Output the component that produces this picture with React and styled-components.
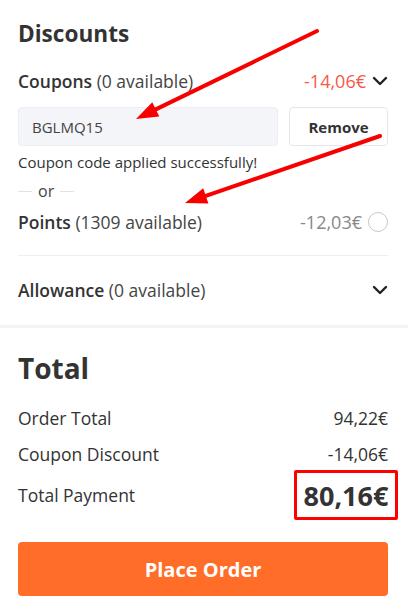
import styled, { createGlobalStyle } from 'styled-components'

const GlobalStyle = createGlobalStyle`
    body {
        margin: 0;
        background: #fff;
        font-family: "Open Sans", "Liberation Sans", sans-serif;
        color: #333;
    }
`

const Chevron = () => (
    <svg width="16" height="10" viewBox="0 0 16 10">
        <path d="M2 2 L8 8 L14 2" fill="none" stroke="#222" strokeWidth="2.4" strokeLinecap="round" strokeLinejoin="round" />
    </svg>
)

const Arrow = ({ x1, y1, x2, y2 }) => {
    const dx = x2 - x1
    const dy = y2 - y1
    const len = Math.hypot(dx, dy)
    const ux = dx / len
    const uy = dy / len
    const bx = x2 - ux * 22
    const by = y2 - uy * 22
    const px = -uy * 8
    const py = ux * 8
    return (
        <g>
            <line x1={x1} y1={y1} x2={bx} y2={by} stroke="#f80000" strokeWidth="4" strokeLinecap="round" />
            <polygon points={`${x2},${y2} ${bx + px},${by + py} ${bx - px},${by - py}`} fill="#f80000" />
        </g>
    )
}

const App = () => {
    return (
        <Page>
            <GlobalStyle />
            <Section>
                <Heading>Discounts</Heading>
                <Row style={{ marginTop: 17 }}>
                    <Label><b>Coupons</b> (0 available)</Label>
                    <Right>
                        <Amount tone="red">-14,06€</Amount>
                        <Chevron />
                    </Right>
                </Row>
                <CouponRow>
                    <CodeBox>BGLMQ15</CodeBox>
                    <RemoveButton>Remove</RemoveButton>
                </CouponRow>
                <Message>Coupon code applied successfully!</Message>
                <OrLine>or</OrLine>
                <Row style={{ marginTop: 7 }}>
                    <Label><b>Points</b> (1309 available)</Label>
                    <Right>
                        <Amount tone="grey">-12,03€</Amount>
                        <Radio />
                    </Right>
                </Row>
                <Divider />
                <Row>
                    <Label><b>Allowance</b> (0 available)</Label>
                    <Right><Chevron /></Right>
                </Row>
            </Section>
            <ThickDivider />
            <Section>
                <TotalHeading>Total</TotalHeading>
                <SumRow style={{ marginTop: 17 }}>
                    <span>Order Total</span>
                    <span>94,22€</span>
                </SumRow>
                <SumRow style={{ marginTop: 6 }}>
                    <span>Coupon Discount</span>
                    <span>-14,06€</span>
                </SumRow>
                <PaymentRow>
                    <span>Total Payment</span>
                    <PaymentValue>80,16€</PaymentValue>
                </PaymentRow>
                <PlaceOrder>Place Order</PlaceOrder>
            </Section>
            <Annotations width="408" height="603" viewBox="0 0 408 603">
                <Arrow x1={317} y1={31} x2={136} y2={119} />
                <Arrow x1={380} y1={136} x2={185} y2={203} />
            </Annotations>
        </Page>
    )
}

export default App

// STYLES
const Page = styled.div`
    position: relative;
    width: 408px;
    height: 603px;
    overflow: hidden;
`

const Section = styled.div`
    padding: 19px 20px 0 18px;
`

const Heading = styled.h2`
    margin: 0;
    font-size: 22.6px;
    line-height: 30px;
    font-weight: 700;
    color: #333;
`

const TotalHeading = styled(Heading)`
    font-size: 28px;
    line-height: 36px;
    margin-top: 3px;
`

const Row = styled.div`
    display: flex;
    align-items: center;
    justify-content: space-between;
    height: 30px;
    font-size: 17.5px;
`

const Label = styled.div`
    color: #444;
    b {
        font-weight: 600;
        color: #333;
    }
`

const Right = styled.div`
    display: flex;
    align-items: center;
    gap: 6px;
    svg { display: block; }
`

const Amount = styled.span`
    font-size: 18px;
    color: ${p => (p.tone === 'red' ? '#f8584a' : '#888')};
`

const Radio = styled.span`
    width: 20px;
    height: 20px;
    border-radius: 50%;
    border: 1px solid #c8c8c8;
    box-sizing: border-box;
    margin-right: 0;
`

const CouponRow = styled.div`
    display: flex;
    gap: 11px;
    margin-top: 11px;
    height: 39px;
`

const CodeBox = styled.div`
    flex: 1;
    display: flex;
    align-items: center;
    padding: 0 13px;
    background: #f4f5f9;
    border: 1px solid #eceef3;
    border-radius: 4px;
    font-size: 15px;
    color: #444;
`

const RemoveButton = styled.button`
    width: 99px;
    background: #fff;
    border: 1px solid #e6e6e6;
    border-radius: 4px;
    font-family: inherit;
    font-size: 15px;
    font-weight: 700;
    color: #333;
    padding: 0;
`

const Message = styled.div`
    margin-top: 7px;
    font-size: 15px;
    line-height: 18px;
    color: #333;
`

const OrLine = styled.div`
    display: flex;
    align-items: center;
    gap: 6px;
    margin-top: 11px;
    height: 18px;
    font-size: 16px;
    color: #444;
    &::before, &::after {
        content: '';
        width: 14px;
        height: 1px;
        background: #e2e2e2;
    }
`

const Divider = styled.div`
    height: 1px;
    background: #eeeef3;
    margin: 18px 0 19px;
`

const ThickDivider = styled.div`
    height: 3px;
    background: #f3f3f7;
    margin-top: 20px;
`

const SumRow = styled.div`
    display: flex;
    justify-content: space-between;
    align-items: center;
    height: 30px;
    font-size: 17.5px;
    color: #333;
`

const PaymentRow = styled(SumRow)`
    height: 50px;
    margin-top: 1px;
    margin-right: -10px;
`

const PaymentValue = styled.span`
    box-sizing: border-box;
    height: 50px;
    width: 104px;
    display: flex;
    align-items: center;
    justify-content: center;
    border: 3px solid #f00;
    border-radius: 2px;
    font-size: 27px;
    font-weight: 700;
    color: #333;
`

const PlaceOrder = styled.button`
    display: block;
    width: 100%;
    height: 54px;
    margin-top: 22px;
    border: none;
    border-radius: 4px;
    background: #ff6d29;
    color: #fff;
    font-family: inherit;
    font-size: 20px;
    font-weight: 700;
`

const Annotations = styled.svg`
    position: absolute;
    top: 0;
    left: 0;
    pointer-events: none;
`
